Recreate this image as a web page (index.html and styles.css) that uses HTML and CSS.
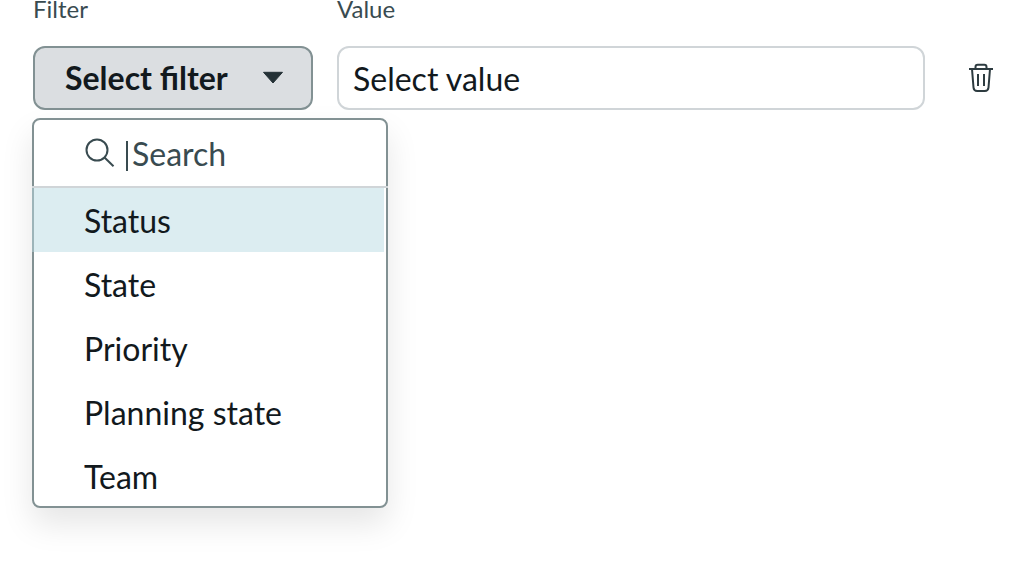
FILE: index.html
```html
<!DOCTYPE html>
<html lang="en">
<head>
  <meta charset="UTF-8">
  <title>Filters</title>
  <link rel="stylesheet" href="styles.css">
</head>
<body>

  <div class="filter-row">
    <div class="field field-filter">
      <div class="label">Filter</div>
      <button class="select-btn">
        <span>Select filter</span>
        <svg class="caret" width="22" height="14" viewBox="0 0 22 14">
          <path d="M1.5 1.3h19L11 12z" fill="#243136" stroke="#243136" stroke-width="1" stroke-linejoin="round"/>
        </svg>
      </button>

      <!-- Dropdown menu -->
      <div class="menu">
        <div class="search">
          <svg width="30" height="30" viewBox="0 0 30 30" fill="none" stroke="#394b50" stroke-width="2">
            <circle cx="12" cy="12" r="10.5"/>
            <path d="M19.5 19.5L28.5 28.3"/>
          </svg>
          <span class="cursor"></span>
          <span class="placeholder">Search</span>
        </div>
        <ul class="options">
          <li class="active">Status</li>
          <li>State</li>
          <li>Priority</li>
          <li>Planning state</li>
          <li>Team</li>
        </ul>
      </div>
    </div>

    <div class="field field-value">
      <div class="label">Value</div>
      <div class="value-box">Select value</div>
    </div>

    <button class="delete-btn" aria-label="Delete">
      <svg width="26" height="30" viewBox="0 0 26 30" fill="none" stroke="#2d3b40" stroke-width="2">
        <path d="M1 6h24M7.5 5.500V4Q7.500 1.800 9.700 1.800h6.600Q18.500 1.800 18.500 4V5.500"/>
        <path d="M4 6L5.500 24.500Q5.800 28 9.200 28h7.600Q20.200 28 20.500 24.500L22 6"/>
        <path d="M10 11v12M16 11v12"/>
      </svg>
    </button>
  </div>

</body>
</html>
```

FILE: styles.css
```css
body {
  margin: 0;
  min-height: 564px;
  font-family: Lato, sans-serif;
  font-size: 32px;
  color: #12191d;
  background: #fff;
}

.filter-row {
  display: flex;
  align-items: flex-end;
  padding: 0 18px 0 33px;
}

.field-filter {
  position: relative;
  width: 280px;
  margin-right: 24px;
}

.field-value {
  width: 588px;
}

.label {
  height: 46px;
  font-size: 24px;
  line-height: 18px;
  color: #394b50;
}

.select-btn {
  display: flex;
  align-items: center;
  justify-content: space-between;
  box-sizing: border-box;
  width: 100%;
  height: 64px;
  padding: 0 27px 2px 30px;
  border: 2px solid #829193;
  border-radius: 12px;
  background: #dbdee1;
  color: #12191d;
  font: bold 32px Lato, sans-serif;
}

.caret {
  margin-top: 2px;
}

.value-box {
  box-sizing: border-box;
  height: 64px;
  padding: 0 14px;
  border: 2px solid #d0d5d8;
  border-radius: 12px;
  line-height: 62px;
}

.delete-btn {
  display: flex;
  align-items: center;
  height: 64px;
  margin-left: 43px;
  padding: 0;
  border: none;
  background: none;
}

.menu {
  position: absolute;
  top: 118px;
  left: -1px;
  box-sizing: border-box;
  width: 356px;
  height: 390px;
  border: 2px solid #829193;
  border-radius: 8px;
  background: #fff;
  box-shadow: 0 16px 32px rgba(0, 0, 0, 0.1);
}

.search {
  display: flex;
  align-items: center;
  height: 66px;
  margin: 0 -2px;
  padding-left: 53px;
  border-bottom: 2px solid #d0d5d8;
  color: #394b50;
}

.cursor {
  width: 2px;
  height: 30px;
  margin: 6px 4px 0 11px;
  background: #394b50;
}

.placeholder {
  padding-top: 1px;
}

.options {
  list-style: none;
  margin: 0;
  padding: 0;
}

.options li {
  height: 64px;
  padding-left: 50px;
  line-height: 66px;
}

.options .active {
  margin: 0 2px 0 -2px;
  border-left: 2px solid #9db4b9;
  background: #dcedf1;
}
```
